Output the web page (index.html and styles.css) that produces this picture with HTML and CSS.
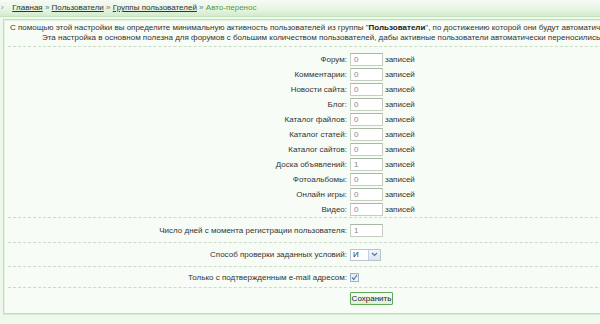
FILE: index.html
```html
<!DOCTYPE html>
<html>
<head>
<meta charset="utf-8">
<link rel="stylesheet" href="styles.css">
</head>
<body>
<div class="topbar">
  <span class="mark">›</span>
  <a href="#">Главная</a> <span class="sep">»</span>
  <a href="#">Пользователи</a> <span class="sep">»</span>
  <a href="#">Группы пользователей</a> <span class="sep">»</span>
  <span class="current">Авто-перенос</span>
</div>
<div class="box">
  <div class="section desc">
    <div class="line1">С помощью этой настройки вы определите минимальную активность пользователей из группы "<b>Пользователи</b>", по достижению которой они будут автоматически переведены в группу</div>
    <div class="line2">Эта настройка в основном полезна для форумов с большим количеством пользователей, дабы активные пользователи автоматически переносились в группу</div>
  </div>
  <div class="section counts">
    <div class="row"><label>Форум:</label><span class="field"><span class="input">0</span><span class="unit">записей</span></span></div>
    <div class="row"><label>Комментарии:</label><span class="field"><span class="input">0</span><span class="unit">записей</span></span></div>
    <div class="row"><label>Новости сайта:</label><span class="field"><span class="input">0</span><span class="unit">записей</span></span></div>
    <div class="row"><label>Блог:</label><span class="field"><span class="input">0</span><span class="unit">записей</span></span></div>
    <div class="row"><label>Каталог файлов:</label><span class="field"><span class="input">0</span><span class="unit">записей</span></span></div>
    <div class="row"><label>Каталог статей:</label><span class="field"><span class="input">0</span><span class="unit">записей</span></span></div>
    <div class="row"><label>Каталог сайтов:</label><span class="field"><span class="input">0</span><span class="unit">записей</span></span></div>
    <div class="row"><label>Доска объявлений:</label><span class="field"><span class="input">1</span><span class="unit">записей</span></span></div>
    <div class="row"><label>Фотоальбомы:</label><span class="field"><span class="input">0</span><span class="unit">записей</span></span></div>
    <div class="row"><label>Онлайн игры:</label><span class="field"><span class="input">0</span><span class="unit">записей</span></span></div>
    <div class="row"><label>Видео:</label><span class="field"><span class="input">0</span><span class="unit">записей</span></span></div>
  </div>
  <div class="section single days">
    <div class="row"><label>Число дней с момента регистрации пользователя:</label><span class="field"><span class="input">1</span></span></div>
  </div>
  <div class="section single method">
    <div class="row"><label>Способ проверки заданных условий:</label><span class="field"><span class="select"><span class="sel-val">И</span><span class="sel-btn"><svg width="7" height="5" viewBox="0 0 7 5"><path d="M1 1 L3.5 3.5 L6 1" fill="none" stroke="#5a78a8" stroke-width="1.2"/></svg></span></span></span></div>
  </div>
  <div class="section single email">
    <div class="row"><label>Только с подтвержденным e-mail адресом:</label><span class="field"><span class="check"><svg width="7" height="7" viewBox="0 0 7 7"><path d="M1 3.5 L2.8 5.5 L6 1" fill="none" stroke="#5577b0" stroke-width="1.2"/></svg></span></span></div>
  </div>
  <div class="section actions">
    <span class="button">Сохранить</span>
  </div>
</div>
</body>
</html>
```
FILE: styles.css
```css
html, body {
  margin: 0;
  padding: 0;
}
body {
  width: 600px;
  height: 324px;
  overflow: hidden;
  background: #eef8ec;
  font-family: "Liberation Sans", Arial, sans-serif;
  font-size: 8px;
  color: #333;
}
.topbar {
  height: 16px;
  line-height: 15px;
  padding-left: 1px;
  background: linear-gradient(to bottom, #f6fbf4 0%, #e6f4e2 60%, #d2ebcd 100%);
  border-bottom: 1px solid #c3e2bd;
  white-space: nowrap;
  color: #777;
}
.topbar .mark {
  display: inline-block;
  width: 9px;
  color: #888;
}
.topbar a {
  color: #333;
  text-decoration: underline;
}
.topbar .sep {
  color: #777;
}
.topbar .current {
  color: #4f9c46;
}
.box {
  margin: 2px 0 0 3px;
  width: 640px;
  height: 295px;
  background: #f8fcf6;
  border: 1px solid #bfe0b8;
  border-right: none;
  box-shadow: inset 1px 1px 0 #e4f3e0, 0 1px 0 #d4ecd0;
  padding: 0 0 0 4px;
  box-sizing: border-box;
  overflow: hidden;
}
.section {
  border-bottom: 1px dashed #c9dcc6;
  width: 630px;
}
.desc {
  height: 27px;
  padding-top: 3px;
  box-sizing: border-box;
  line-height: 10px;
  white-space: nowrap;
  overflow: hidden;
}
.desc .line1 {
  padding-left: 2px;
}
.desc .line2 {
  padding-left: 34px;
}
.desc b {
  color: #222;
}
.counts {
  padding: 5px 0 0;
}
.row {
  display: grid;
  grid-template-columns: 339px auto;
  column-gap: 3px;
  align-items: center;
  height: 15px;
}
.row label {
  text-align: right;
  white-space: nowrap;
}
.field {
  display: flex;
  align-items: center;
  gap: 2px;
}
.input {
  display: inline-block;
  width: 33px;
  height: 13px;
  box-sizing: border-box;
  background: #fff;
  border: 1px solid #c4cfc1;
  border-top-color: #aab7a7;
  color: #888;
  line-height: 11px;
  padding-left: 3px;
}
.unit {
  color: #333;
}
.single {
  display: flex;
  align-items: center;
}
.days {
  height: 24px;
}
.method {
  height: 23px;
}
.email {
  height: 20px;
}
.select {
  display: flex;
  width: 31px;
  height: 12px;
  box-sizing: border-box;
  background: #fff;
  border: 1px solid #b9c4cf;
}
.sel-val {
  flex: 1;
  line-height: 10px;
  padding-left: 2px;
  color: #333;
}
.sel-btn {
  width: 11px;
  display: flex;
  align-items: center;
  justify-content: center;
  background: linear-gradient(#f2f5fb, #dde5f1);
  border-left: 1px solid #c3cedf;
}
.check {
  display: flex;
  align-items: center;
  justify-content: center;
  width: 9px;
  height: 9px;
  box-sizing: border-box;
  border: 1px solid #9bb1cf;
  background: linear-gradient(#e3e9f4, #f6f8fc);
}
.actions {
  border-bottom: none;
  padding: 4px 0 0 342px;
}
.button {
  display: inline-block;
  width: 43px;
  height: 13px;
  box-sizing: border-box;
  border: 1px solid #5ea856;
  border-radius: 1px;
  background: linear-gradient(#f9fdf8, #dcefd8);
  line-height: 11px;
  text-align: center;
  color: #222;
}
```
